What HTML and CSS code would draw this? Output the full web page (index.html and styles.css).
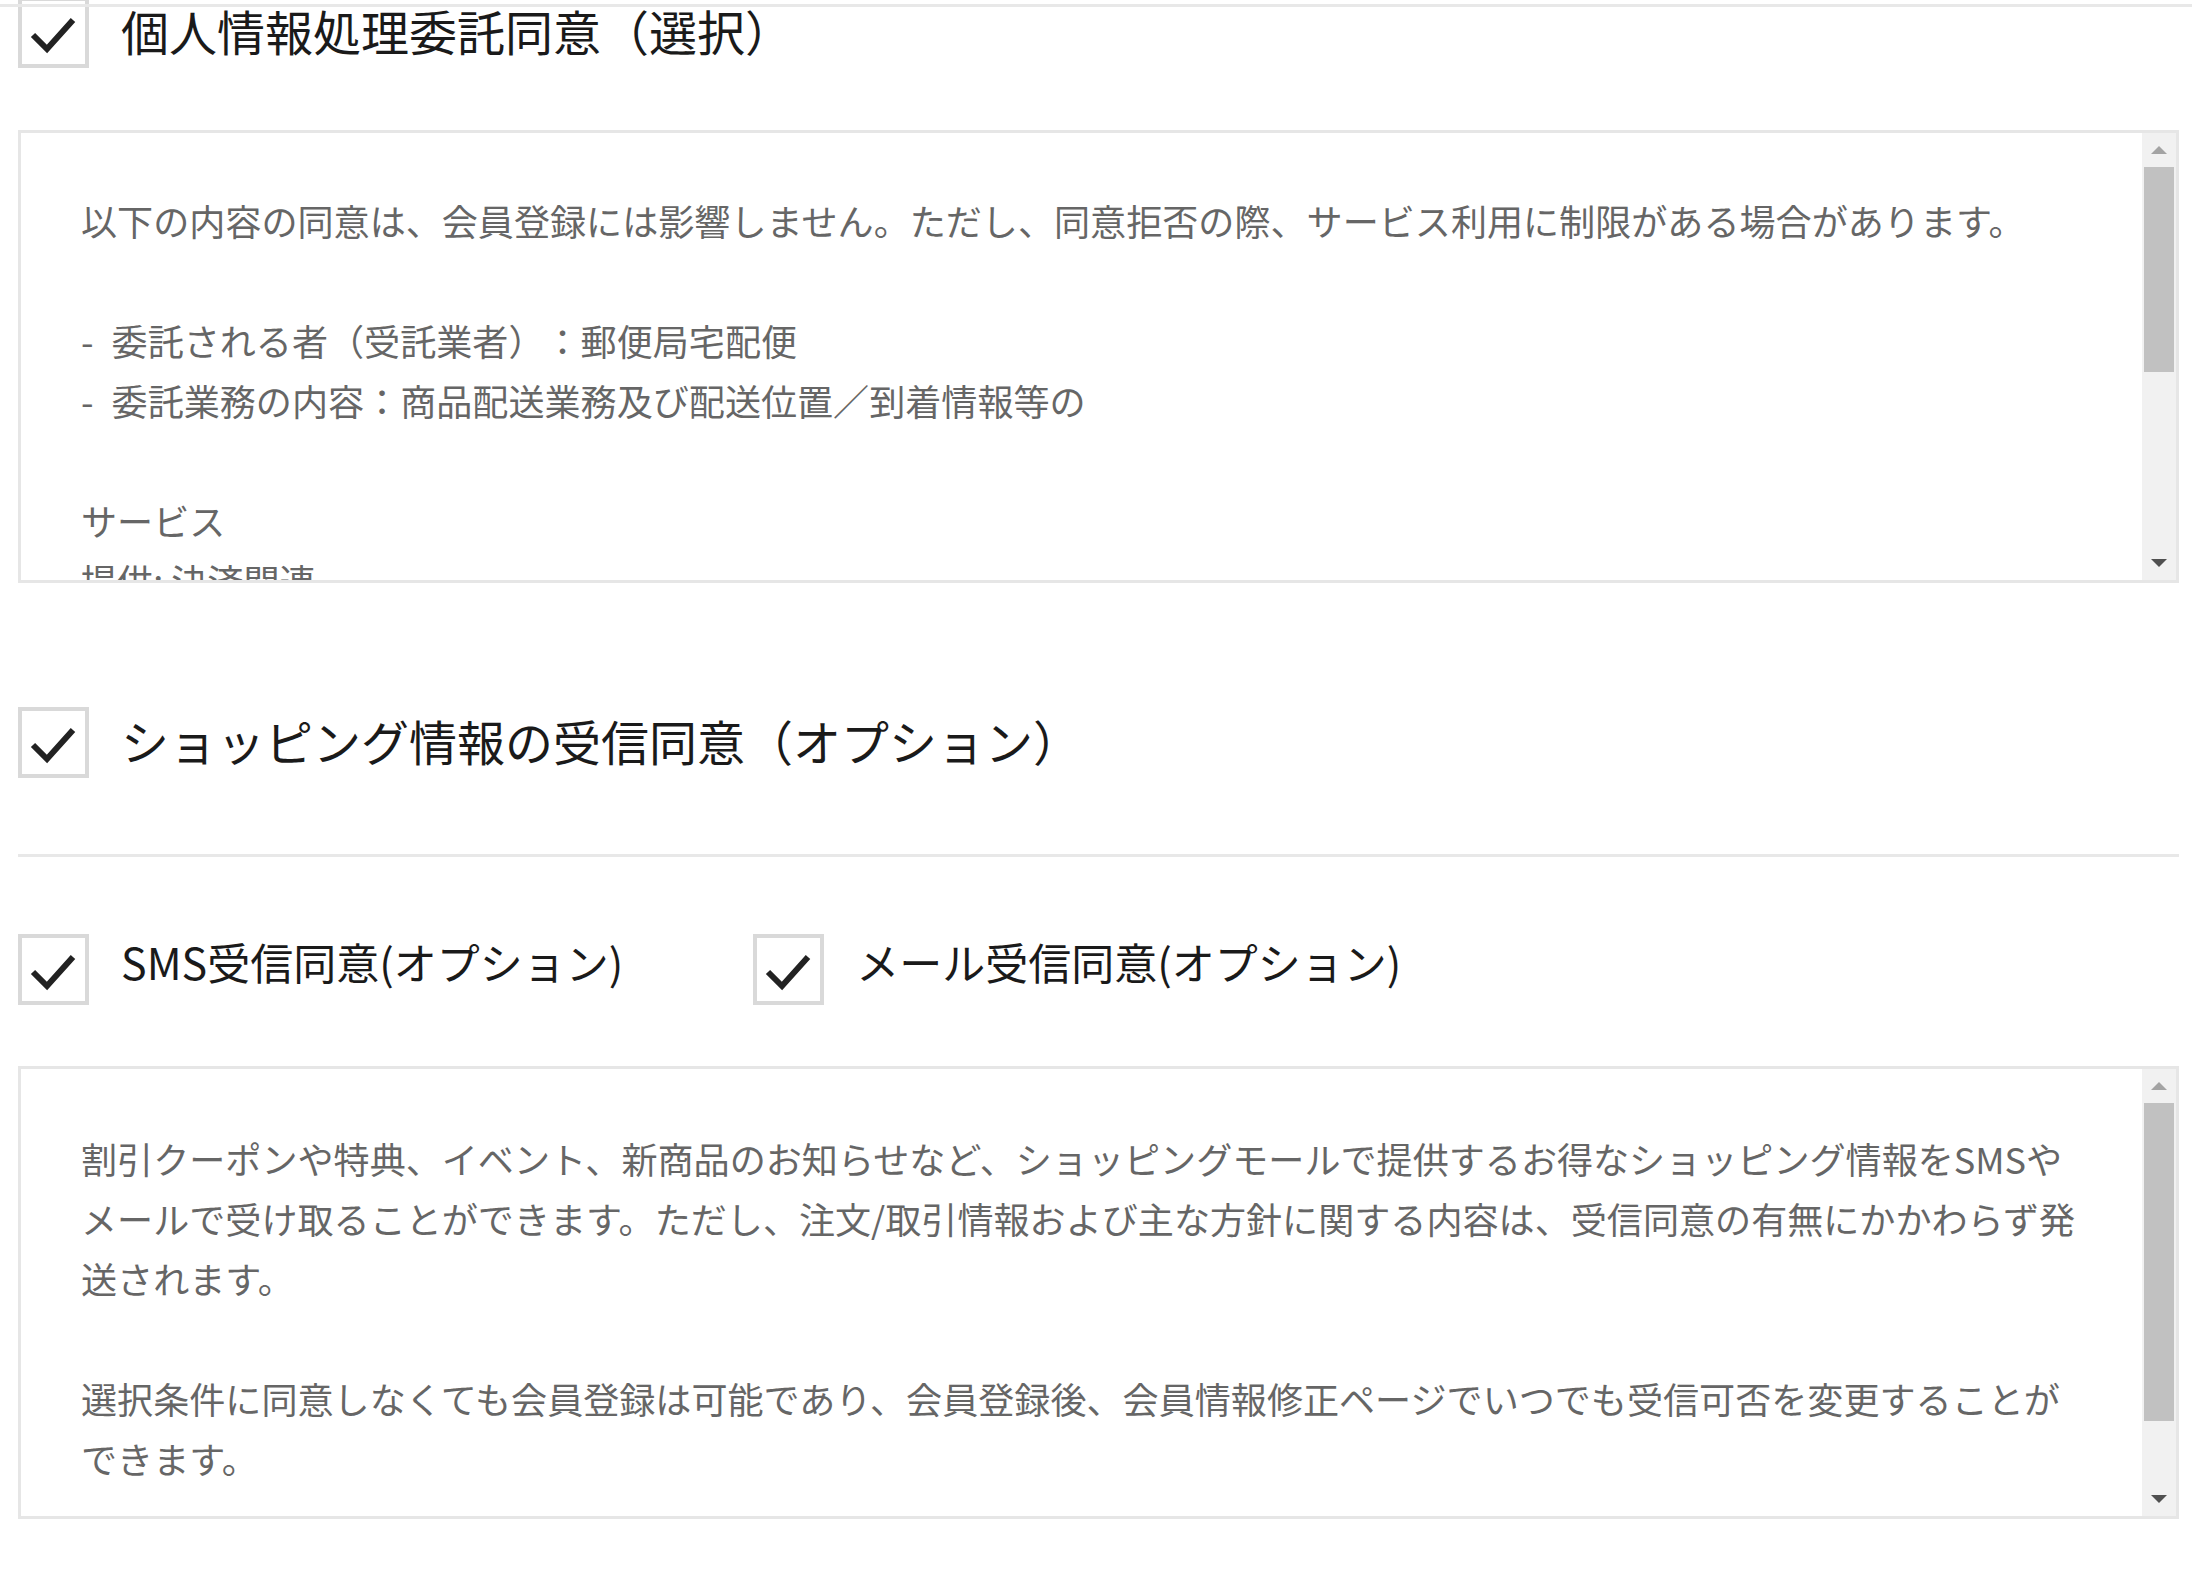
FILE: index.html
```html
<!DOCTYPE html>
<html lang="ja">
<head>
    <meta charset="UTF-8">
    <meta name="viewport" content="width=device-width, initial-scale=1.0">
    <title>同意事項</title>
    <link rel="stylesheet" href="styles.css">
</head>
<body>
    <div class="top-rule"></div>
    <div class="page">
        <!-- 個人情報処理委託 -->
        <label class="consent-row first">
            <span class="check">
                <svg viewBox="0 0 63 63" width="63" height="63"><polyline points="11,34 25,48 51,19" /></svg>
            </span>
            <span class="consent-title">個人情報処理委託同意（選択）</span>
        </label>

        <div class="terms">
            <div class="terms-body">
                <p>以下の内容の同意は、会員登録には影響しません。ただし、同意拒否の際、サービス利用に制限がある場合があります。</p>
                <p>-&ensp;委託される者（受託業者）：郵便局宅配便<br>-&ensp;委託業務の内容：商品配送業務及び配送位置／到着情報等の</p>
                <p>サービス<br>提供: 決済関連</p>
            </div>
            <div class="scrollbar">
                <span class="sb-btn up"></span>
                <span class="sb-track"><span class="sb-thumb" style="height: 205px"></span></span>
                <span class="sb-btn down"></span>
            </div>
        </div>

        <!-- ショッピング情報 -->
        <label class="consent-row second">
            <span class="check">
                <svg viewBox="0 0 63 63" width="63" height="63"><polyline points="11,34 25,48 51,19" /></svg>
            </span>
            <span class="consent-title">ショッピング情報の受信同意（オプション）</span>
        </label>

        <hr class="divider">

        <div class="option-row">
            <label class="option">
                <span class="check">
                    <svg viewBox="0 0 63 63" width="63" height="63"><polyline points="11,34 25,48 51,19" /></svg>
                </span>
                <span class="option-title">SMS受信同意(オプション)</span>
            </label>
            <label class="option">
                <span class="check">
                    <svg viewBox="0 0 63 63" width="63" height="63"><polyline points="11,34 25,48 51,19" /></svg>
                </span>
                <span class="option-title">メール受信同意(オプション)</span>
            </label>
        </div>

        <div class="terms second-terms">
            <div class="terms-body">
                <p>割引クーポンや特典、イベント、新商品のお知らせなど、ショッピングモールで提供するお得なショッピング情報をSMSやメールで受け取ることができます。ただし、注文/取引情報および主な方針に関する内容は、受信同意の有無にかかわらず発送されます。</p>
                <p>選択条件に同意しなくても会員登録は可能であり、会員登録後、会員情報修正ページでいつでも受信可否を変更することができます。</p>
            </div>
            <div class="scrollbar">
                <span class="sb-btn up"></span>
                <span class="sb-track"><span class="sb-thumb" style="height: 318px"></span></span>
                <span class="sb-btn down"></span>
            </div>
        </div>
    </div>
</body>
</html>
```

FILE: styles.css
```css
body {
    margin: 0;
    padding: 0;
    background: #ffffff;
    font-family: "Noto Sans CJK JP", "Noto Sans", sans-serif;
    color: #1a1a1a;
    text-spacing-trim: space-all;
    overflow: hidden;
}
.top-rule {
    position: fixed;
    top: 4px;
    left: 0;
    right: 0;
    height: 3px;
    background: #e8e8e8;
    z-index: 2;
}
.page {
    padding: 0 13px 0 18px;
}
.consent-row {
    display: flex;
    align-items: center;
    gap: 32px;
}
.consent-row.first {
    margin-top: -3px;
}
.consent-row.second {
    margin-top: 124px;
}
.check {
    flex: none;
    box-sizing: border-box;
    width: 71px;
    height: 71px;
    border: 4px solid #d9d9d9;
    background: #fff;
}
.check svg {
    display: block;
}
.check polyline {
    fill: none;
    stroke: #222;
    stroke-width: 6;
}
.consent-title {
    font-size: 48px;
    line-height: 56px;
    padding-bottom: 6px;
    color: #1a1a1a;
}
.terms {
    display: flex;
    box-sizing: border-box;
    height: 453px;
    margin-top: 62px;
    border: 3px solid #e6e6e6;
    background: #fff;
}
.terms.second-terms {
    margin-top: 61px;
}
.terms-body {
    flex: 1;
    overflow: hidden;
    padding: 57px 53px 0 60px;
    font-size: 36.1px;
    line-height: 60px;
    color: #666;
}
.terms-body p {
    margin: 0 0 60px;
}
.second-terms .terms-body {
    padding-top: 59px;
}
.scrollbar {
    flex: none;
    width: 34px;
    display: flex;
    flex-direction: column;
    background: #f1f1f1;
}
.sb-btn {
    flex: none;
    height: 34px;
    display: flex;
    align-items: center;
    justify-content: center;
}
.sb-btn::before {
    content: "";
    width: 0;
    height: 0;
    border-left: 8px solid transparent;
    border-right: 8px solid transparent;
}
.sb-btn.up::before {
    border-bottom: 8px solid #a3a3a3;
}
.sb-btn.down::before {
    border-top: 8px solid #505050;
}
.sb-track {
    flex: 1;
    padding: 0 2px;
}
.sb-thumb {
    display: block;
    background: #c1c1c1;
}
.divider {
    margin: 76px 0 0;
    border: none;
    height: 3px;
    background: #e8e8e8;
}
.option-row {
    display: flex;
    align-items: center;
    gap: 130px;
    margin-top: 77px;
}
.option {
    display: flex;
    align-items: center;
    gap: 32px;
}
.option-title {
    font-size: 43px;
    line-height: 50px;
    padding-bottom: 18px;
    color: #1a1a1a;
}
```
